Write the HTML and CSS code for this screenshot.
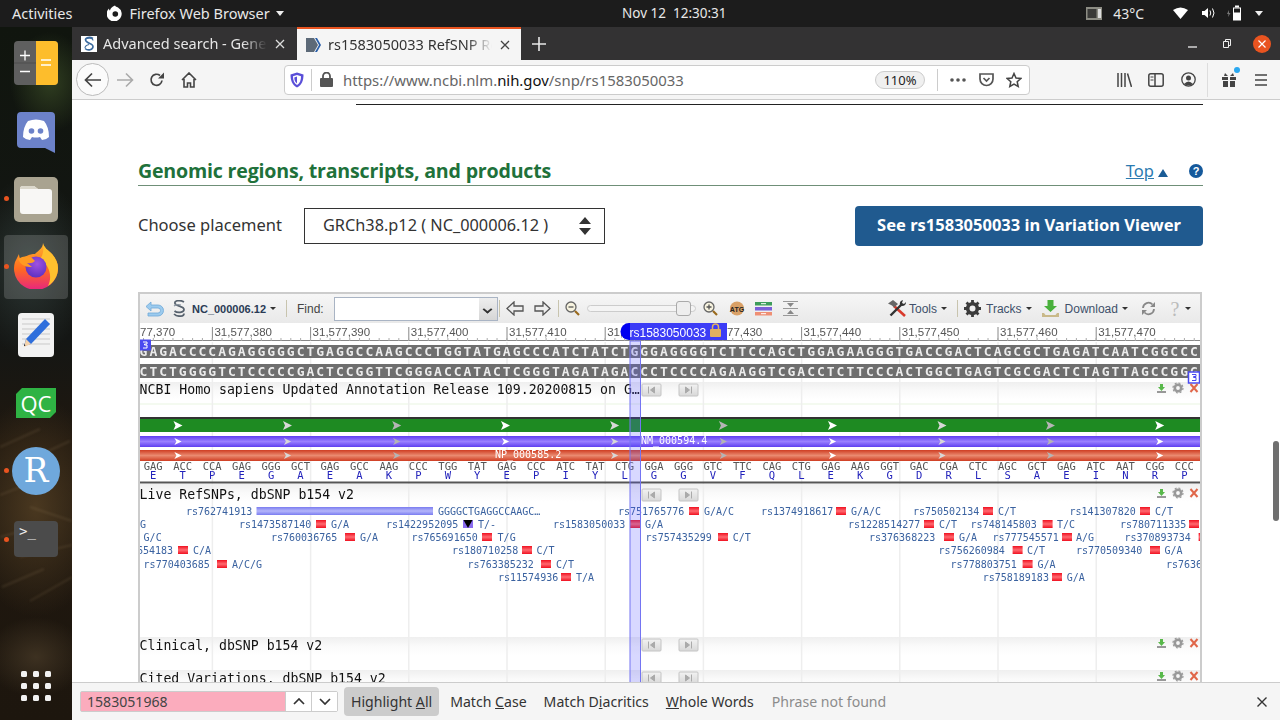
FILE: index.html
```html
<!DOCTYPE html>
<html lang="en">
<head>
  <meta charset="UTF-8" />
  <title>rs1583050033 RefSNP Report</title>
  <link rel="stylesheet" href="styles.css">
</head>
<body>
  <header class="topbar">
    <span class="activities">Activities</span>
    <span class="appmenu">
      <svg width="16" height="16" viewBox="0 0 16 16"><path fill="#fff" d="M8 .5c.6 1 1.600 1.500 3 2a7.500 7.500 0 1 1-9 1c0 1 .4 1.700 1 2 .3-2 2-4 5-5z"/><circle cx="8.300" cy="9" r="2.800" fill="#1c1c1c"/></svg>
      <span>Firefox Web Browser</span>
      <i class="caret-white"></i>
    </span>
    <span class="clock">Nov 12&nbsp;&nbsp;12:30:31</span>
    <span class="status">
      <svg class="st-cpu" width="16" height="13" viewBox="0 0 16 13"><rect width="16" height="13" fill="#8d8d84"/><rect x="1.500" y="2" width="9" height="9" fill="#3a3a38"/><rect x="12" y="2" width="3" height="9" fill="#ddd"/></svg>
      <span class="st-temp">43°C</span>
      <svg class="st-wifi" width="15" height="12" viewBox="0 0 15 12"><path fill="#fff" d="M0 3Q7.500-2 15 3L7.500 12z"/></svg>
      <svg class="st-vol" width="14" height="12" viewBox="0 0 14 12"><path fill="#fff" d="M0 4h2.500L6 1v10L2.500 8H0z"/><path fill="none" stroke="#fff" d="M8 3.500q1.500 2.500 0 5M10.500 1.500q3 4.500 0 9"/></svg>
      <svg class="st-bat" width="14" height="16" viewBox="0 0 14 16"><path fill="#777" d="M2 5 0 9h1.500L1 12l2.500-4H2z"/><rect x="6" y="2.500" width="8" height="13" fill="#fff"/><rect x="8" y="0.500" width="4" height="2" fill="#fff"/><rect x="7" y="3.500" width="6" height="4" fill="#1c1c1c"/></svg>
      <i class="caret-white st-caret"></i>
    </span>
  </header>

  <div class="desktop">
    <aside class="dock">
      <svg class="dock-streaks" width="72" height="200" viewBox="0 0 72 200">
        <g fill="none" stroke="#a5906a" stroke-opacity=".16" stroke-width="2">
          <path d="M0 30 40 12M14 50 70 24M0 78 46 60M30 90 72 104M0 120 36 110M20 140 72 128M2 170 44 152M30 184 72 160"/>
        </g>
      </svg>

      <div class="dock-item dock-calc">
        <svg width="44" height="44" viewBox="0 0 44 44"><rect width="44" height="44" rx="4" fill="#5f5f5f"/><path d="M22 0h18a4 4 0 0 1 4 4v36a4 4 0 0 1-4 4H22z" fill="#fdbd2c"/><path d="M0 22h22" stroke="#4e4e4e"/><path d="M6 14.500h10M11 9.500v10M6 30.500h10" stroke="#fff" stroke-width="1.300"/><path d="M27 19h10M27 24h10" stroke="#fff" stroke-width="1.300"/></svg>
      </div>
      <div class="dock-item dock-discord">
        <svg width="38" height="41" viewBox="0 0 38 41"><path d="M4 0h30a4 4 0 0 1 4 4v37L28 36H4a4 4 0 0 1-4-4V4a4 4 0 0 1 4-4z" fill="#6c82c9"/><path d="M11 9q8-3 16 0 5 6 5 16-3 3-7 3l-2-3q-4 1-8 0l-2 3q-4 0-7-3 0-10 5-16z" fill="#fff"/><circle cx="14.500" cy="19" r="2.800" fill="#6c82c9"/><circle cx="23.500" cy="19" r="2.800" fill="#6c82c9"/></svg>
      </div>
      <div class="dock-item dock-files">
        <i class="run-dot"></i>
        <svg width="44" height="45" viewBox="0 0 44 45"><rect width="44" height="45" rx="5" fill="#a9a390"/><path d="M6 12a3 3 0 0 1 3-3h11l4 3h11a3 3 0 0 1 3 3v19a3 3 0 0 1-3 3H9a3 3 0 0 1-3-3z" fill="#f8f7f5"/><path d="M6 12a3 3 0 0 1 3-3h11l4 3z" fill="#dcd8cc"/></svg>
      </div>
      <div class="dock-item dock-firefox">
        <i class="run-dot"></i>
        <svg width="44" height="46" viewBox="0 0 44 46">
          <defs>
            <linearGradient id="ffBody" x1="0" y1="0" x2="0" y2="1"><stop offset="0" stop-color="#ffb32c"/><stop offset=".55" stop-color="#ff6b1f"/><stop offset="1" stop-color="#e8257f"/></linearGradient>
            <radialGradient id="ffGlobe" cx=".55" cy=".35" r=".7"><stop offset="0" stop-color="#a052e0"/><stop offset="1" stop-color="#5a2fc0"/></radialGradient>
          </defs>
          <path d="M29 0c1 5 5 7 9 11 4 5 6 9 6 14a22 21.500 0 1 1-43-6l4-8c0 3 1 5 3 6 3-4 8-6 13-6 3-3 8-6 8-11z" fill="url(#ffBody)"/>
          <path d="M29 0c1 5 5 7 9 11 4 5 6 9 6 14 0 8-4 14-10 18 3-6 3-13-1-20-2-3-5-5-7-7 3-3 4-10 3-16z" fill="#ffc02e"/>
          <circle cx="22" cy="24" r="10.500" fill="url(#ffGlobe)"/>
          <path d="M4 16q6-4 13-2l4 4q-3 3-8 2l5 4q-10 1-14-8z" fill="#ff9a22"/>
        </svg>
      </div>
      <div class="dock-item dock-editor">
        <svg width="36" height="44" viewBox="0 0 36 44"><rect width="36" height="44" rx="4" fill="#f2f2f2"/><path d="M4 6h28M4 11h28M4 16h28M4 21h28M4 26h28M4 31h28" stroke="#c9c9c9"/><path d="M27 6l5 5-19 20-7 2 2-7z" fill="#2f6fdc"/><path d="M8 26l5 5-7 3z" fill="#f3d2ac"/><path d="M6 33l1.500-.5L6 31z" fill="#222"/></svg>
      </div>
      <div class="dock-item dock-qc">
        <span class="qc-badge">QC</span>
      </div>
      <div class="dock-item dock-r">
        <i class="run-dot"></i>
        <span class="r-badge">R</span>
      </div>
      <div class="dock-item dock-term">
        <i class="run-dot"></i>
        <span class="term-badge">&gt;_</span>
      </div>
      <div class="dock-grid">
        <i></i><i></i><i></i><i></i><i></i><i></i><i></i><i></i><i></i>
      </div>
    </aside>

    <div class="window">
      <div class="tabbar">
        <div class="tab">
          <svg class="tab-icon" width="16" height="16" viewBox="0 0 16 16"><rect width="16" height="16" fill="#fff"/><path d="M12 2.500C8 0 3 2 5 5s7 2 7 5.500-5 4.500-8 2" fill="none" stroke="#3b6a9e" stroke-width="1.600"/><path d="M4 3.500c3-2 8-1.500 8 1M4 12c0-2 2-3 4-3.500" fill="none" stroke="#3b6a9e" stroke-width="1.100"/></svg>
          <span class="tab-title">Advanced search - Gene -</span>
          <svg class="tab-x" width="10" height="10" viewBox="0 0 10 10"><path d="M1 1l8 8M9 1l-8 8" stroke="#ddd" stroke-width="1.300"/></svg>
        </div>
        <div class="tab tab-active">
          <svg class="tab-icon" width="16" height="16" viewBox="0 0 16 16"><path d="M0 1h8l4 7-4 7H0z" fill="#5d6a78"/><path d="M9 1h2l4 7-4 7H9l4-7z" fill="#2a5fa8"/></svg>
          <span class="tab-title">rs1583050033 RefSNP Re</span>
          <svg class="tab-x" width="10" height="10" viewBox="0 0 10 10"><path d="M1 1l8 8M9 1l-8 8" stroke="#444" stroke-width="1.300"/></svg>
        </div>
        <svg class="tab-new" width="14" height="14" viewBox="0 0 14 14"><path d="M7 0v14M0 7h14" stroke="#e8e8e8" stroke-width="1.600"/></svg>
        <div class="winbtns">
          <svg width="9" height="9" viewBox="0 0 9 9"><path d="M0 8h9" stroke="#eee" stroke-width="1.300"/></svg>
          <svg class="win-restore" width="8" height="9" viewBox="0 0 8 9"><path d="M.5 2.500h5v6h-5zM2.500 2.500v-2h5v6h-2" fill="none" stroke="#eee"/></svg>
          <span class="win-close"><svg width="8" height="8" viewBox="0 0 8 8"><path d="M.5.500l7 7M7.500.500l-7 7" stroke="#fff" stroke-width="1.200"/></svg></span>
        </div>
      </div>

      <nav class="navbar">
        <span class="nav-back"><svg width="18" height="16" viewBox="0 0 18 16"><path d="M17 8H2m6-6.500L1.500 8 8 14.500" fill="none" stroke="#444" stroke-width="1.700"/></svg></span>
        <svg class="nav-forward" width="17" height="16" viewBox="0 0 17 16"><path d="M0 8h15M9 1.500 15.500 8 9 14.500" fill="none" stroke="#aaa" stroke-width="1.600"/></svg>
        <svg class="nav-reload" width="16" height="16" viewBox="0 0 16 16"><path d="M13 8.500A5.500 5.500 0 1 1 11 3.500" fill="none" stroke="#444" stroke-width="1.700"/><path d="M15 .5v6H9z" fill="#444"/></svg>
        <svg class="nav-home" width="16" height="16" viewBox="0 0 16 16"><path d="M1 8l7-7 7 7M3 7v8h3.500v-4h3v4H13V7" fill="none" stroke="#444" stroke-width="1.600"/></svg>
        <div class="urlbar">
          <svg class="url-shield" width="14" height="16" viewBox="0 0 14 16"><path d="M7 .5 13.500 2.500c0 6-1.500 10.500-6.500 13C2 13 .5 8.500.5 2.500z" fill="#5a4fd8"/><path d="M7 3l4 1.200c0 4-1 6.800-4 8.800-3-2-4-4.800-4-8.800z" fill="#fff"/><path d="M7 4.500v7c-2-1.500-2.700-3.500-2.700-6z" fill="#5a4fd8"/></svg>
          <i class="url-sep"></i>
          <svg class="url-lock" width="13" height="15" viewBox="0 0 13 15"><rect y="6" width="13" height="9" rx="1" fill="#555"/><path d="M3 6.500V4a3.500 3.500 0 0 1 7 0v2.500" fill="none" stroke="#555" stroke-width="1.800"/></svg>
          <span class="url-text">https://www.ncbi.nlm.<b>nih.gov</b>/snp/rs1583050033</span>
          <span class="zoom-pill">110%</span>
          <i class="url-sep url-sep2"></i>
          <svg class="url-dots" width="16" height="4" viewBox="0 0 16 4"><circle cx="2" cy="2" r="1.800" fill="#555"/><circle cx="8" cy="2" r="1.800" fill="#555"/><circle cx="14" cy="2" r="1.800" fill="#555"/></svg>
          <svg class="url-pocket" width="15" height="14" viewBox="0 0 15 14"><path d="M1 1h13v5a6.500 6.500 0 0 1-13 0z" fill="none" stroke="#555" stroke-width="1.700"/><path d="M4.500 5 7.500 8l3-3" fill="none" stroke="#555" stroke-width="1.700"/></svg>
          <svg class="url-star" width="16" height="16" viewBox="0 0 16 16"><path d="M8 1.500l2 4.500 4.800.5-3.600 3.200 1 4.800L8 12l-4.200 2.500 1-4.800L1.200 6.500 6 6z" fill="none" stroke="#444" stroke-width="1.500"/></svg>
        </div>
        <svg class="nav-library" width="15" height="14" viewBox="0 0 15 14"><path d="M1 0v14M4.500 0v14M8 0v14M10.500.5l4 13.500" stroke="#444" stroke-width="1.500"/></svg>
        <svg class="nav-sidebar" width="16" height="14" viewBox="0 0 16 14"><rect x=".8" y=".8" width="14.400" height="12.400" rx="2" fill="none" stroke="#444" stroke-width="1.500"/><path d="M7 1v12" stroke="#444" stroke-width="1.500"/><path d="M2.500 4h3M2.500 7h3" stroke="#444"/></svg>
        <svg class="nav-account" width="15" height="15" viewBox="0 0 15 15"><circle cx="7.500" cy="7.500" r="6.700" fill="none" stroke="#444" stroke-width="1.300"/><circle cx="7.500" cy="6" r="2.500" fill="#444"/><path d="M3 12q4.500-5 9 0-4.500 3-9 0z" fill="#444"/></svg>
        <i class="nav-sep"></i>
        <span class="nav-gift">
          <svg width="14" height="15" viewBox="0 0 14 15"><path d="M0 5h6v3H0zM8 5h6v3H8zM1 9h5v6H1zM8 9h5v6H8z" fill="#444"/><path d="M3 1l3 3H2zM11 1 8 4h4z" fill="#444"/></svg>
          <i class="gift-dot"></i>
        </span>
        <svg class="nav-menu" width="12" height="12" viewBox="0 0 12 12"><path d="M0 1h12M0 6h12M0 11h12" stroke="#444" stroke-width="1.600"/></svg>
      </nav>

      <main class="page">
        <i class="scroll-thumb"></i>
        <div class="prev-rule"></div>
        <div class="section-head">
          <h2>Genomic regions, transcripts, and products</h2>
          <a class="top-link" href="#">Top</a>
          <i class="top-arrow"></i>
          <span class="help-dot">?</span>
        </div>
        <div class="placement">
          <span class="placement-label">Choose placement</span>
          <div class="select-box">
            <span class="select-value">GRCh38.p12 ( NC_000006.12 )</span>
            <svg width="12" height="18" viewBox="0 0 12 18"><path d="M6 0l6 7H0zM6 18l6-7H0z" fill="#333"/></svg>
          </div>
          <button class="viewer-btn">See rs1583050033 in Variation Viewer</button>
        </div>

        <section class="seqviewer">
          <div class="toolbar">
            <svg class="tb-back" width="19" height="18" viewBox="0 0 19 18"><path d="M6 2 1 6.500 6 11V8h7a2.500 2.500 0 0 1 0 5H3v3h10a5.500 5.500 0 0 0 0-11H6z" fill="#9ccbee" stroke="#6ea8d8" stroke-width=".8"/></svg>
            <svg class="tb-seq" width="14" height="17" viewBox="0 0 14 17"><path d="M12 2C8-.5 2 .5 3 3.500S12 6 12 9.500 5 13 2.500 11M2 14c3 3 10 3 10-.5" fill="none" stroke="#56616d" stroke-width="1.700"/><path d="M2 6c2-1.500 5-1.500 7-1" fill="none" stroke="#8a95a0" stroke-width="1.200"/></svg>
            <b class="tb-accession">NC_000006.12</b>
            <i class="tb-caret"></i>
            <i class="tb-sep tb-sep-a"></i>
            <span class="tb-find">Find:</span>
            <div class="tb-input"><i class="tb-combo"></i></div>
            <i class="tb-sep tb-sep-b"></i>
            <svg class="tb-left" width="18" height="15" viewBox="0 0 18 15"><path d="M8 1 1 7.500 8 14v-4h9V5H8z" fill="#eee" stroke="#555" stroke-width="1.300"/></svg>
            <svg class="tb-right" width="17" height="15" viewBox="0 0 17 15"><path d="M9 1l7 6.500L9 14v-4H1V5h8z" fill="#eee" stroke="#555" stroke-width="1.300"/></svg>
            <i class="tb-sep tb-sep-c"></i>
            <svg class="tb-zoomout" width="15" height="15" viewBox="0 0 15 15"><circle cx="6" cy="6" r="5" fill="#f7f3df" stroke="#666" stroke-width="1.300"/><path d="M3.500 6h5" stroke="#555" stroke-width="1.300"/><path d="M10 10l4 4" stroke="#9a6a1c" stroke-width="2.200"/></svg>
            <div class="tb-slider"><i class="tb-thumb"></i></div>
            <svg class="tb-zoomin" width="15" height="15" viewBox="0 0 15 15"><circle cx="6" cy="6" r="5" fill="#f7f3df" stroke="#666" stroke-width="1.300"/><path d="M3.500 6h5M6 3.500v5" stroke="#555" stroke-width="1.300"/><path d="M10 10l4 4" stroke="#9a6a1c" stroke-width="2.200"/></svg>
            <svg class="tb-atg" width="16" height="15" viewBox="0 0 16 15"><circle cx="8" cy="7.500" r="7" fill="#d9a066"/><text x="8" y="11" text-anchor="middle" class="atg-text">ATG</text></svg>
            <svg class="tb-align" width="17" height="14" viewBox="0 0 17 14"><rect width="17" height="3.500" fill="#3d9c5a"/><rect y="5" width="17" height="3.500" fill="#7a5fd8"/><rect y="10" width="17" height="3.500" fill="#ef8f74"/><path d="M6 1.700h5M6 11.700h5" stroke="#fff"/></svg>
            <svg class="tb-collapse" width="15" height="15" viewBox="0 0 15 15"><path d="M0 7.500h15M0 .5h15M0 14.500h15" stroke="#999"/><path d="M7.500 6 4 2h7zM7.500 9 4 13h7z" fill="#888"/></svg>

            <svg class="tb-tools" width="18" height="17" viewBox="0 0 18 17"><path d="M6 6l11 10" stroke="#d8392b" stroke-width="2.600"/><path d="M0 3.500 5 0l5 4-4 3.500-2-2z" fill="#666"/><path d="M14 4 2.500 15.500" stroke="#333" stroke-width="2.400"/><path d="M12 5q-1-4 3-5l-1 3 2 1 2-2q0 4-4 4z" fill="#333"/></svg>
            <span class="tb-label tb-label-tools">Tools</span>
            <i class="tb-caret"></i>
            <i class="tb-sep tb-sep-d"></i>
            <svg class="tb-gear" width="17" height="17" viewBox="0 0 17 17"><circle cx="8.500" cy="8.500" r="4.800" fill="none" stroke="#3c3c3c" stroke-width="3.600"/><path d="M8.500 0v3M8.500 14v3M0 8.500h3M14 8.500h3M2.500 2.500l2 2M12.500 12.500l2 2M14.500 2.500l-2 2M4.500 12.500l-2 2" stroke="#3c3c3c" stroke-width="2.800"/></svg>
            <span class="tb-label tb-label-tracks">Tracks</span>
            <i class="tb-caret"></i>
            <svg class="tb-download" width="17" height="17" viewBox="0 0 17 17"><path d="M5.500 0h6v6H15l-6.500 6L2 6h3.500z" fill="#49b03c"/><path d="M0 13h2l1.500 2h10l1.500-2h2v4H0z" fill="#c9b98a"/></svg>
            <span class="tb-label tb-label-download">Download</span>
            <i class="tb-caret"></i>
            <svg class="tb-refresh" width="15" height="15" viewBox="0 0 15 15"><path d="M2 7a5.500 5.500 0 0 1 9.500-3.500M13 8a5.500 5.500 0 0 1-9.500 3.500" fill="none" stroke="#888" stroke-width="1.800"/><path d="M14 1v5H9zM1 14V9h5z" fill="#888"/></svg>
            <span class="tb-question">?</span>
            <i class="tb-caret"></i>
          </div>
          <svg id="tracks" class="tracks" width="1060" height="360" viewBox="140 323 1060 360"></svg>
        </section>
      </main>

      <div class="findbar">
        <div class="find-field">
          <span class="find-input">1583051968</span>
          <span class="find-step"><svg width="12" height="7" viewBox="0 0 12 7"><path d="M1 6l5-5 5 5" fill="none" stroke="#333" stroke-width="1.700"/></svg></span>
          <span class="find-step"><svg width="12" height="7" viewBox="0 0 12 7"><path d="M1 1l5 5 5-5" fill="none" stroke="#333" stroke-width="1.700"/></svg></span>
        </div>
        <span class="find-toggle find-on">Highlight <u>A</u>ll</span>
        <span class="find-toggle">Match <u>C</u>ase</span>
        <span class="find-toggle">Match D<u>i</u>acritics</span>
        <span class="find-toggle"><u>W</u>hole Words</span>
        <span class="find-status">Phrase not found</span>
        <svg class="find-close" width="10" height="10" viewBox="0 0 10 10"><path d="M.5.500l9 9M9.500.500l-9 9" stroke="#333" stroke-width="1.400"/></svg>
      </div>
    </div>
  </div>

  <script src="viewer.js"></script>
</body>
</html>
```

FILE: styles.css
```css
html, body {
  margin: 0;
  height: 720px;
  overflow: hidden;
  background: #000;
  font-family: "Noto Sans", sans-serif;
}
i { display: block; }

/* gnome top bar */
.topbar {
  height: 27px;
  box-sizing: border-box;
  padding-bottom: 1px;
  background: #1c1c1c;
  color: #e8e8e8;
  display: flex;
  align-items: center;
  position: relative;
  font-size: 14.5px;
}
.activities { margin-left: 12px; }
.appmenu {
  display: flex;
  align-items: center;
  margin-left: 35px;
  gap: 6px;
}
.caret-white {
  width: 0;
  height: 0;
  border-left: 4.5px solid transparent;
  border-right: 4.5px solid transparent;
  border-top: 5px solid #eee;
}
.clock {
  position: absolute;
  left: 622px;
  top: 4px;
  font-size: 13.5px;
}
.status {
  margin-left: auto;
  display: flex;
  align-items: center;
  font-size: 14px;
}
.st-temp { margin-left: 11px; }
.st-wifi { margin-left: 29px; }
.st-vol { margin-left: 14px; }
.st-bat { margin-left: 11px; }
.st-caret { margin: 0 17px 0 14px; }

.desktop {
  display: flex;
  height: 693px;
}

/* dock */
.dock {
  width: 72px;
  flex: none;
  position: relative;
  background:
    radial-gradient(40px 50px at 50px 55px, #2f3d20 0%, rgba(47,61,32,0) 100%),
    radial-gradient(60px 90px at 30px 240px, #2c3634 0%, rgba(44,54,52,0) 100%),
    radial-gradient(70px 110px at 36px 480px, #4a3820 0%, rgba(74,56,32,0) 100%),
    radial-gradient(50px 40px at 36px 630px, #3d3121 0%, rgba(61,49,33,0) 100%),
    linear-gradient(#10150e 0%, #141614 45%, #20180f 60%, #1d160e 100%);
}
.dock-streaks {
  position: absolute;
  left: 0;
  top: 390px;
  filter: blur(1px);
}
.dock-item {
  display: flex;
  justify-content: center;
  position: relative;
}
.dock-item svg { display: block; }
.dock-calc { padding-top: 14px; }
.dock-discord { margin-top: 27px; padding-left: 0; }
.dock-files { margin-top: 24px; }
.dock-firefox {
  margin: 13px 4px 0;
  padding: 8px 0 10px;
  background: rgba(255,255,255,0.16);
  border-radius: 4px;
}
.dock-editor { margin-top: 14px; }
.dock-qc { margin-top: 31px; }
.dock-r { margin-top: 29px; }
.dock-term { margin-top: 26px; }
.run-dot {
  position: absolute;
  left: 4px;
  top: 19px;
  width: 5px;
  height: 5px;
  border-radius: 50%;
  background: #e95420;
}
.dock-firefox .run-dot { left: 0; top: 29px; }
.dock-r .run-dot { top: 21px; }
.dock-term .run-dot { top: 16px; }
.qc-badge {
  width: 40px;
  height: 30px;
  background: #2fb344;
  color: #fff;
  font: 22px/30px "Open Sans", sans-serif;
  text-align: center;
  clip-path: polygon(6px 0, 100% 0, 100% 24px, 34px 100%, 0 100%, 0 6px);
}
.r-badge {
  width: 48px;
  height: 48px;
  border-radius: 50%;
  background: #6fa8dc;
  color: #fff;
  font: 33px/48px "DejaVu Serif", serif;
  text-align: center;
}
.term-badge {
  width: 44px;
  height: 36px;
  border-radius: 4px;
  background: #4b4b4b;
  color: #eee;
  font: 14px/20px "DejaVu Sans Mono", monospace;
  padding-left: 5px;
  box-sizing: border-box;
  text-align: left;
}
.dock-grid {
  position: absolute;
  left: 21px;
  bottom: 19px;
  display: grid;
  grid-template-columns: repeat(3, 6px);
  gap: 6px;
}
.dock-grid i {
  height: 6px;
  border-radius: 1.500px;
  background: #f2f2f2;
}

/* firefox window */
.window {
  flex: 1;
  display: flex;
  flex-direction: column;
  background: #fff;
  min-width: 0;
}
.tabbar {
  height: 33px;
  background: #333233;
  display: flex;
  align-items: center;
  flex: none;
}
.tab {
  width: 224px;
  height: 33px;
  box-sizing: border-box;
  padding: 0 11px 0 9px;
  display: flex;
  align-items: center;
  color: #e6e6e6;
  font-size: 14.5px;
  margin-right: 1px;
}
.tab-active {
  background: #f5f5f5;
  border-top: 2px solid #e95420;
  color: #333;
}
.tab-icon { flex: none; margin-right: 6px; }
.tab-title {
  flex: 1;
  padding-bottom: 2px;
  white-space: nowrap;
  overflow: hidden;
  -webkit-mask-image: linear-gradient(to right, #000 85%, transparent);
  mask-image: linear-gradient(to right, #000 85%, transparent);
}
.tab-x { flex: none; margin-left: 8px; }
.tab-new { margin-left: 10px; }
.winbtns {
  margin-left: auto;
  display: flex;
  align-items: center;
  padding-right: 9px;
}
.win-restore { margin-left: 26px; }
.win-close {
  margin-left: 22px;
  width: 18px;
  height: 18px;
  border-radius: 50%;
  background: #e95420;
  display: flex;
  align-items: center;
  justify-content: center;
}

.navbar {
  height: 40px;
  flex: none;
  box-sizing: border-box;
  background: #f5f5f5;
  border-bottom: 1px solid #ccc;
  display: flex;
  align-items: center;
  padding-left: 4px;
}
.navbar svg { flex: none; display: block; }
.nav-back {
  width: 31px;
  height: 31px;
  border: 1px solid #bbb;
  border-radius: 50%;
  background: #fbfbfb;
  display: flex;
  align-items: center;
  justify-content: center;
}
.nav-forward { margin-left: 8px; }
.nav-reload { margin-left: 15px; }
.nav-home { margin-left: 16px; }
.urlbar {
  margin-left: 87px;
  width: 746px;
  height: 30px;
  box-sizing: border-box;
  background: #fff;
  border: 1px solid #ccc;
  border-radius: 4px;
  display: flex;
  align-items: center;
  padding-left: 5px;
  color: #666;
  font-size: 14.900px;
}
.url-sep {
  width: 1px;
  height: 22px;
  background: #ccc;
  margin-left: 7px;
}
.url-lock { margin-left: 8px; }
.url-text {
  margin-left: 10px;
  width: 532px;
  white-space: nowrap;
}
.url-text b { font-weight: 400; color: #111; }
.zoom-pill {
  width: 48px;
  height: 16px;
  border: 1px solid #ccc;
  border-radius: 9px;
  background: #f0f0f0;
  color: #222;
  font-size: 13px;
  line-height: 16px;
  text-align: center;
}
.url-sep2 { margin-left: 12px; }
.url-dots { margin-left: 12px; }
.url-pocket { margin-left: 13px; }
.url-star { margin-left: 12px; }
.nav-library { margin-left: 87px; }
.nav-sidebar { margin-left: 16px; }
.nav-account { margin-left: 17px; }
.nav-sep {
  width: 1px;
  height: 34px;
  background: #ddd;
  margin-left: 11px;
}
.nav-gift {
  position: relative;
  margin-left: 14px;
  display: block;
}
.nav-gift svg { display: block; }
.gift-dot {
  position: absolute;
  right: -4px;
  top: -5px;
  width: 6px;
  height: 6px;
  border-radius: 50%;
  background: #2aa8f0;
}
.nav-menu { margin-left: 19px; }

/* ncbi page */
.page {
  flex: 1;
  min-height: 0;
  overflow: hidden;
  position: relative;
  box-sizing: border-box;
  padding: 4px 77px 0 66px;
  color: #333;
}
.scroll-thumb {
  position: absolute;
  right: 1px;
  top: 341px;
  width: 6px;
  height: 80px;
  border-radius: 3px;
  background: #6f6f6f;
}
.prev-rule {
  margin-left: 218px;
  height: 1px;
  background: #222;
}
.section-head {
  margin-top: 52px;
  height: 28px;
  border-bottom: 1px solid #6f8f78;
  display: flex;
  align-items: center;
}
h2 {
  margin: 0;
  color: #20713a;
  font: bold 19.600px/24px "Open Sans", sans-serif;
  letter-spacing: -0.2px;
}
.top-link {
  margin-left: auto;
  padding-bottom: 2px;
  color: #2b7ab0;
  font-size: 16.500px;
}
.top-arrow {
  width: 0;
  height: 0;
  margin: 4px 0 0 4px;
  border-left: 5px solid transparent;
  border-right: 5px solid transparent;
  border-bottom: 8px solid #1a5c96;
}
.help-dot {
  margin-left: 21px;
  width: 14px;
  height: 14px;
  border-radius: 50%;
  background: #15599b;
  color: #fff;
  font: bold 11px/14px "Liberation Sans", sans-serif;
  text-align: center;
}
.placement {
  margin-top: 20px;
  height: 40px;
  display: flex;
  align-items: center;
}
.placement-label {
  font-size: 16.500px;
  width: 166px;
  padding-bottom: 4px;
}
.select-box {
  width: 301px;
  height: 36px;
  box-sizing: border-box;
  border: 1px solid #333;
  padding: 0 13px 0 18px;
  display: flex;
  align-items: center;
  justify-content: space-between;
  font-size: 16.300px;
}
.select-value { padding-bottom: 2px; }
.viewer-btn {
  margin-left: auto;
  width: 348px;
  height: 40px;
  border: none;
  border-radius: 4px;
  background: #205a8f;
  color: #fff;
  font: bold 16.500px "Noto Sans", sans-serif;
  padding: 0 0 3px;
}

/* sequence viewer */
.seqviewer {
  margin-top: 46px;
  border: 2px solid #ccc;
  border-bottom: none;
  width: 1060px;
}
.toolbar {
  height: 29px;
  background: linear-gradient(#f6f6f6, #e9e9e9);
  display: flex;
  align-items: center;
  font: 12px "Liberation Sans", sans-serif;
  color: #444;
}
.toolbar svg { display: block; flex: none; }
.tb-back { margin-left: 5px; }
.tb-seq { margin-left: 8px; }
.tb-accession {
  margin-left: 6px;
  font-size: 11px;
  color: #2a3b55;
}
.tb-caret {
  width: 0;
  height: 0;
  margin-left: 4px;
  border-left: 3px solid transparent;
  border-right: 3px solid transparent;
  border-top: 3.500px solid #333;
  flex: none;
}
.tb-sep {
  width: 1px;
  height: 17px;
  background: #c8c4ae;
  flex: none;
}
.tb-sep-a { margin-left: 10px; }
.tb-find { margin-left: 10px; width: 37px; }
.tb-input {
  width: 162px;
  height: 22px;
  border: 1px solid #a9b4c4;
  background: #fff;
  display: flex;
  justify-content: flex-end;
}
.tb-combo {
  width: 18px;
  background: linear-gradient(#eee, #d6d6d6);
  position: relative;
}
.tb-combo::after {
  content: "";
  position: absolute;
  left: 5px;
  top: 8px;
  width: 5px;
  height: 5px;
  border-right: 2px solid #333;
  border-bottom: 2px solid #333;
  transform: scale(1, .8) rotate(45deg);
  transform-origin: 50% 50%;
}
.tb-sep-b { margin-left: 1px; }
.tb-left { margin-left: 6px; }
.tb-right { margin-left: 10px; }
.tb-sep-c { margin-left: 7px; }
.tb-zoomout { margin-left: 6px; }
.tb-slider {
  margin-left: 7px;
  width: 109px;
  height: 7px;
  box-sizing: border-box;
  border: 1px solid #ccc;
  border-radius: 4px;
  background: #f4f4f4;
  position: relative;
}
.tb-thumb {
  position: absolute;
  left: 88px;
  top: -5px;
  width: 15px;
  height: 15px;
  box-sizing: border-box;
  border: 1px solid #aaa;
  border-radius: 3px;
  background: #eee;
}
.tb-zoomin { margin-left: 7px; }
.tb-atg { margin-left: 11px; }
.atg-text {
  font: bold 7px "Liberation Sans", sans-serif;
  fill: #222;
}
.tb-align { margin-left: 10px; }
.tb-collapse { margin-left: 11px; }
.tb-tools { margin-left: 90px; }
.tb-label {
  font-size: 12px;
  color: #40506a;
}
.tb-label-tools { margin-left: 3px; }
.tb-sep-d { margin-left: 10px; }
.tb-gear { margin-left: 6px; }
.tb-label-tracks { margin-left: 5px; }
.tb-download { margin-left: 10px; }
.tb-label-download { margin-left: 6px; }
.tb-refresh { margin-left: 13px; }
.tb-question {
  margin-left: 13px;
  width: 12px;
  color: #bbb;
  font: 20px/20px "Liberation Serif", serif;
  text-align: center;
}
.tracks {
  display: block;
  filter: blur(0.3px);
}
.t-ruler { font: 11.500px "Liberation Sans", sans-serif; fill: #555; }
.t-seq {
  font: bold 13px "DejaVu Sans Mono", monospace;
  letter-spacing: 1.990px;
  fill: #ececec;
}
.t-title { font: 13.200px "DejaVu Sans Mono", monospace; fill: #111; }
.t-codon { font: 10.500px "DejaVu Sans Mono", monospace; fill: #555; text-anchor: middle; }
.t-amino { font: 10.500px "DejaVu Sans Mono", monospace; fill: #2222bb; text-anchor: middle; }
.t-snp { font: 10px "DejaVu Sans Mono", monospace; fill: #3a62a0; }
.t-feat { font: 10px "DejaVu Sans Mono", monospace; fill: #ffffff; }
.t-flag { font: 12px "Liberation Sans", sans-serif; fill: #fff; }

/* find bar */
.findbar {
  height: 38px;
  flex: none;
  box-sizing: border-box;
  background: #f5f5f5;
  border-top: 1px solid #ccc;
  display: flex;
  align-items: center;
  padding-left: 8px;
  font-size: 14.100px;
  color: #333;
  position: relative;
}
.find-field {
  display: flex;
  height: 21px;
  width: 258px;
  box-sizing: border-box;
  border: 1px solid #ccc;
  border-radius: 2px;
}
.find-input {
  width: 198px;
  padding-left: 6px;
  background: #fbacbd;
  color: #444;
  line-height: 19px;
}
.find-step {
  flex: 1;
  border-left: 1px solid #ccc;
  background: #fff;
  display: flex;
  align-items: center;
  justify-content: center;
}
.find-toggle { margin-left: 17px; white-space: nowrap; }
.find-on {
  margin-left: 6px;
  padding: 0 7px;
  height: 29px;
  line-height: 29px;
  background: #ccc;
  border-radius: 4px;
}
.find-on + .find-toggle { margin-left: 11px; }
.find-status { margin-left: 18px; color: #8c8c8c; }
.find-close {
  margin-left: auto;
  margin-right: 13px;
}
```

FILE: viewer.js
```js
// draws the track panels of the sequence viewer into the #tracks svg
const svg = document.getElementById("tracks");
const NS = "http://www.w3.org/2000/svg";

function add(tag, attrs, text, parent) {
  const e = document.createElementNS(NS, tag);
  for (const k in attrs) e.setAttribute(k, attrs[k]);
  if (text) e.textContent = text;
  (parent || svg).appendChild(e);
  return e;
}

const defs = add("defs", {});

function gradient(id, stops) {
  const g = add("linearGradient", { id: id, x1: 0, y1: 0, x2: 0, y2: 1 }, null, defs);
  stops.forEach((c, i) => add("stop", { offset: i / (stops.length - 1), "stop-color": c }, null, g));
}

gradient("hdr", ["#efefef", "#fafafa", "#ffffff"]);
gradient("purple", ["#5e3ff0", "#9a80ff", "#5e3ff0"]);
gradient("red", ["#cf3d22", "#ea8a70", "#cf3d22"]);
gradient("snpbar", ["#7a7cf0", "#b5b6fa", "#7a7cf0"]);
gradient("mark", ["#f01020", "#ff6a70", "#f01020"]);
gradient("ctl", ["#f2f2f2", "#d8d8d8"]);

const BASE = 9.82;
const TICK0 = 212.4;

// track header bands go under the grid
[[382, 18], [484, 18], [637, 18], [670, 18]].forEach(([y, h]) => {
  add("rect", { x: 140, y: y, width: 1060, height: h, fill: "url(#hdr)" });
});
add("rect", { x: 140, y: 403, width: 1060, height: 2, fill: "#f4faf0" });

// grid and ruler, with only the part of a label that shows beside the flag
const rulerText = { "-1": ["77,370", 140], 4: ["31,", null], 5: ["77,430", 727] };
for (let k = -1; k < 10; k++) {
  const x = TICK0 + k * 98.2;
  add("path", { d: `M${x} 342V690`, stroke: "#eeeeee", "stroke-width": 1.5 });
  add("path", { d: `M${x} 327V341`, stroke: "#888" });
  const part = rulerText[k];
  const label = part ? part[0] : "31,577," + (380 + k * 10);
  const lx = part && part[1] ? part[1] : x + 2;
  add("text", { x: lx, y: 336, class: "t-ruler" }, label);
}
add("path", { d: "M140 340.500H1200", stroke: "#888" });
for (let x = 143.5; x < 1200; x += BASE) {
  add("path", { d: `M${x} 338V341`, stroke: "#aaa" });
}

// sequence strands
const strandTop = "GAGACCCCAGAGGGGGCTGAGGCCAAGCCCTGGTATGAGCCCATCTATCTGGGAGGGGTCTTCCAGCTGGAGAAGGGTGACCGACTCAGCGCTGAGATCAATCGGCCC";
const strandBottom = "CTCTGGGGTCTCCCCCGACTCCGGTTCGGGACCATACTCGGGTAGATAGACCCTCCCCAGAAGGTCGACCTCTTCCCACTGGCTGAGTCGCGACTCTAGTTAGCCGGG";
add("rect", { x: 140, y: 345, width: 1060, height: 13, fill: "#6e6e6e" });
add("rect", { x: 140, y: 364, width: 1060, height: 14, fill: "#6e6e6e" });
add("text", { x: 139.6, y: 356, class: "t-seq" }, strandTop);
add("text", { x: 139.6, y: 375.5, class: "t-seq" }, strandBottom);

// strand end markers
add("rect", { x: 140, y: 339.5, width: 11, height: 11, fill: "#4a4af0" });
add("path", { d: "M143 342h4v2h-2.500v1h2.500v3h-4", fill: "none", stroke: "#fff" });
add("rect", { x: 1188.5, y: 372, width: 11, height: 11, fill: "#fff", stroke: "#4a4af0", "stroke-width": 1.5 });
add("path", { d: "M1192 374.500h4v2h-2.500v1h2.500v3h-4", fill: "none", stroke: "#4a4af0" });

// gene, transcript and protein bars
add("rect", { x: 140, y: 417, width: 1060, height: 2, fill: "#333" });
add("rect", { x: 140, y: 419, width: 1060, height: 13, fill: "#1e8a22" });
add("rect", { x: 140, y: 436, width: 1060, height: 11, fill: "url(#purple)" });
add("rect", { x: 140, y: 450, width: 1060, height: 11, fill: "url(#red)" });

const arrowX = [178, 287.5, 396.7, 505.5, 614.6, 723.4, 832.5, 942, 1050.5, 1159.7];
const arrowCol = ["#ffffff", "#d8d8d8", "#b5b5b5"];
arrowX.forEach((x, i) => {
  const col = arrowCol[i % 3];
  [[425.5, 1], [441.5, 0.8], [455.5, 0.8]].forEach(([y, s]) => {
    if (y === 455.5 && x === 505.5) return; // label sits here on the protein bar
    const w = 4.5 * s, h = 4.5 * s;
    add("path", { d: `M${x - w} ${y - h}L${x + w} ${y}L${x - w} ${y + h}L${x - w + 2} ${y}Z`, fill: col });
  });
});
add("text", { x: 641, y: 443.5, class: "t-feat" }, "NM_000594.4");
add("text", { x: 495, y: 457.5, class: "t-feat" }, "NP_000585.2");

const codons = "GAG ACC CCA GAG GGG GCT GAG GCC AAG CCC TGG TAT GAG CCC ATC TAT CTG GGA GGG GTC TTC CAG CTG GAG AAG GGT GAC CGA CTC AGC GCT GAG ATC AAT CGG CCC".split(" ");
const aminos = "ETPEGAEAKPWYEPIYLGGVFQLEKGDRLSAEINRP";
codons.forEach((c, i) => {
  const x = 153.2 + i * 29.46;
  add("text", { x: x, y: 470, class: "t-codon" }, c);
  add("text", { x: x, y: 479, class: "t-amino" }, aminos[i]);
});
add("rect", { x: 140, y: 481.5, width: 1060, height: 2, fill: "#555" });

// titles and per track controls
function controls(y) {
  [642, 679].forEach((x, i) => {
    add("rect", { x: x, y: y, width: 19, height: 12, rx: 1, fill: "url(#ctl)", stroke: "#c4c4c4" });
    const c = x + 9.5;
    const d = i === 0
      ? `M${c - 3} ${y + 2.5}v7M${c + 3} ${y + 3}L${c - 1} ${y + 6}L${c + 3} ${y + 9}Z`
      : `M${c + 3} ${y + 2.5}v7M${c - 3} ${y + 3}L${c + 1} ${y + 6}L${c - 3} ${y + 9}Z`;
    add("path", { d: d, stroke: "#aaa", fill: "#aaa" });
  });
  const m = y + 4;
  add("path", { d: `M1160 ${m - 4}h3v3h2l-3.500 4l-3.500-4h2z`, fill: "#58b84a" });
  add("path", { d: `M1157 ${m + 4}h9`, stroke: "#777", "stroke-width": 1.5 });
  add("circle", { cx: 1178, cy: m, r: 3.2, fill: "none", stroke: "#999", "stroke-width": 2.6 });
  add("circle", { cx: 1178, cy: m, r: 5, fill: "none", stroke: "#999", "stroke-width": 1.2, "stroke-dasharray": "2 1.900" });
  add("path", { d: `M1190.500 ${m - 4}l7 8M1197.500 ${m - 4}l-7 8`, stroke: "#e0674a", "stroke-width": 2 });
}

[
  ["NCBI Homo sapiens Updated Annotation Release 109.20200815 on G…", 394, 384],
  ["Live RefSNPs, dbSNP b154 v2", 499, 489],
  ["Clinical, dbSNP b154 v2", 650, 639],
  ["Cited Variations, dbSNP b154 v2", 683, 672]
].forEach(([t, y, cy]) => {
  add("text", { x: 139.6, y: y, class: "t-title" }, t);
  controls(cy);
});

// dbSNP rows: row y, label, label x, marker x, allele, allele x
const rows = [
  [511, "rs751765776", 618, 689, "G/A/C", 704],
  [511, "rs1374918617", 761, 836, "G/A/C", 851],
  [511, "rs750502134", 913, 983, "C/T", 998],
  [511, "rs141307820", 1069.5, 1140, "C/T", 1155],
  [524, "rs1473587140", 239, 316, "G/A", 331],
  [524, "rs1583050033", 553, 630, "G/A", 645],
  [524, "rs1228514277", 848, 924, "C/T", 939],
  [524, "rs748145803", 970.6, 1042.6, "T/C", 1057],
  [524, "rs780711335", 1120, 1189],
  [537, "rs760036765", 271, 345, "G/A", 360],
  [537, "rs765691650", 411.5, 482, "T/G", 497.6],
  [537, "rs757435299", 645.6, 718, "C/T", 732.7],
  [537, "rs376368223", 869, 944, "G/A", 959],
  [537, "rs777545571", 992.6, 1062, "A/G", 1076],
  [537, "rs370893734", 1124.5, 1198.6],
  [550, "654183", 137, 178, "C/A", 193],
  [550, "rs180710258", 452, 522, "C/T", 536.5],
  [550, "rs756260984", 938.6, 1012.6, "C/T", 1027],
  [550, "rs770509340", 1076, 1150, "G/A", 1164.5],
  [564, "rs770403685", 143.6, 217, "A/C/G", 232],
  [564, "rs763385232", 467.6, 541, "C/T", 556],
  [564, "rs778803751", 950.6, 1022.6, "G/A", 1037.4],
  [564, "rs7636", 1166],
  [577, "rs11574936", 498, 561, "T/A", 576],
  [577, "rs758189183", 982.7, 1052, "G/A", 1066.7]
];
rows.forEach(([y, label, lx, mx, allele, ax]) => {
  add("text", { x: lx, y: y + 3.5, class: "t-snp" }, label);
  if (mx) add("rect", { x: mx, y: y - 4, width: 10, height: 8, fill: "url(#mark)" });
  if (allele) add("text", { x: ax, y: y + 3.5, class: "t-snp" }, allele);
});
add("text", { x: 140, y: 527.5, class: "t-snp" }, "G");
add("text", { x: 143.6, y: 540.5, class: "t-snp" }, "G/C");

add("text", { x: 186, y: 514.5, class: "t-snp" }, "rs762741913");
add("rect", { x: 256.5, y: 507, width: 176.5, height: 8, fill: "url(#snpbar)" });
add("text", { x: 438, y: 514.5, class: "t-snp" }, "GGGGCTGAGGCCAAGC…");

add("text", { x: 386, y: 527.5, class: "t-snp" }, "rs1422952095");
add("rect", { x: 463, y: 520, width: 10, height: 8, fill: "#8a6cf0" });
add("path", { d: "M463.500 520H472.500L468 528Z", fill: "#000" });
add("text", { x: 478, y: 527.5, class: "t-snp" }, "T/-");

// selected position column and its flag
add("rect", { x: 630, y: 341, width: 10.5, height: 350, fill: "rgba(90,90,255,0.24)", stroke: "#7474f2" });
add("path", { d: "M630 323V340H629A8.500 8.500 0 0 1 629 323Z", fill: "#0000f0" });
add("rect", { x: 630, y: 323, width: 97, height: 17, fill: "#3c3cf6" });
add("text", { x: 629.5, y: 337, class: "t-flag" }, "rs1583050033");
add("rect", { x: 710, y: 329, width: 11, height: 8, rx: 1, fill: "#e0b060" });
add("path", { d: "M712.500 329V327A3 3 0 0 1 718.500 327V329", fill: "none", stroke: "#e0b060", "stroke-width": 1.5 });
```
